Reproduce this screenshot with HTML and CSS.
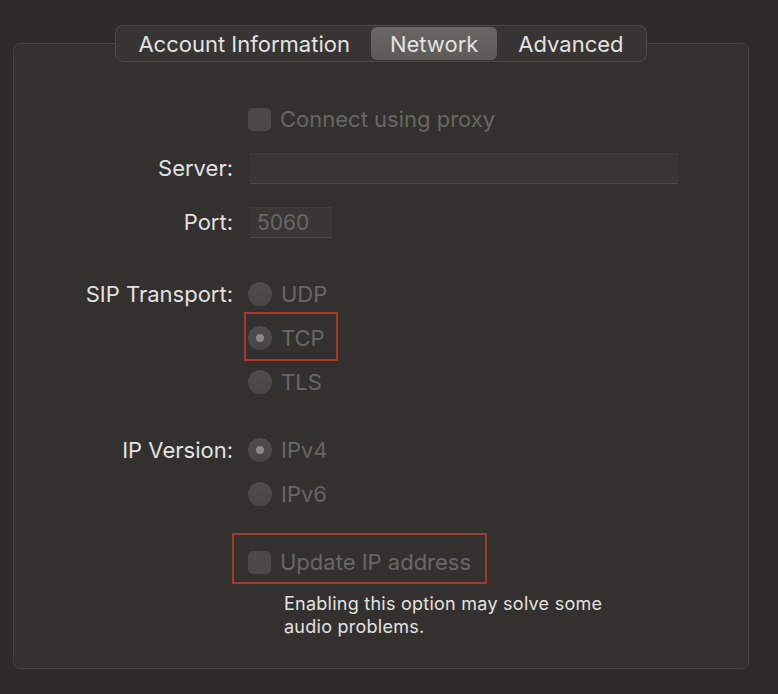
FILE: index.html
```html
<!DOCTYPE html>
<html lang="en">
<head>
  <meta charset="UTF-8">
  <title>Network Settings</title>
  <link rel="stylesheet" href="styles.css">
</head>
<body>
  <div class="panel">
    <div class="tabs">
      <div class="tab">Account Information</div>
      <div class="tab selected">Network</div>
      <div class="tab">Advanced</div>
    </div>

    <div class="row first">
      <div class="label"></div>
      <div class="control">
        <span class="option"><span class="checkbox"></span>Connect using proxy</span>
      </div>
    </div>

    <div class="row field-row server-row">
      <div class="label">Server:</div>
      <div class="control"><div class="input server"></div></div>
    </div>

    <div class="row field-row port-row">
      <div class="label">Port:</div>
      <div class="control"><div class="input port">5060</div></div>
    </div>

    <div class="row group">
      <div class="label">SIP Transport:</div>
      <div class="control stack">
        <span class="option"><span class="radio"></span>UDP</span>
        <span class="option mark mark-tcp"><span class="radio on"></span>TCP</span>
        <span class="option"><span class="radio"></span>TLS</span>
      </div>
    </div>

    <div class="row group">
      <div class="label">IP Version:</div>
      <div class="control stack">
        <span class="option"><span class="radio on"></span>IPv4</span>
        <span class="option"><span class="radio"></span>IPv6</span>
      </div>
    </div>

    <div class="row group">
      <div class="label"></div>
      <div class="control">
        <span class="option mark mark-update"><span class="checkbox"></span>Update IP address</span>
      </div>
    </div>

    <div class="row help-row">
      <div class="label"></div>
      <div class="control help">Enabling this option may solve some<br>audio problems.</div>
    </div>
  </div>
</body>
</html>
```

FILE: styles.css
```css
body {
  margin: 0;
  background: #2c2b2a;
  font-family: Inter, "Liberation Sans", sans-serif;
  color: #e3e2e0;
  height: 694px;
  overflow: hidden;
}
.panel {
  margin: 43px 0 0 13px;
  width: 734px;
  height: 624px;
  background: #32312f;
  border: 1px solid #454442;
  border-radius: 7px;
}
.tabs {
  display: flex;
  width: fit-content;
  margin: -19px auto 0;
  height: 33px;
  padding: 1px 1px;
  background: #363533;
  border: 1px solid #4b4a48;
  border-radius: 8px;
  font-size: 22px;
}
.tab {
  display: flex;
  align-items: center;
  padding: 0 21px;
  border-radius: 6px;
}
.tab.selected {
  background: linear-gradient(#686765, #5c5b59);
  padding: 0 19px;
}
.row {
  display: flex;
  align-items: flex-start;
  font-size: 22px;
}
.row.first { margin-top: 45px; }
.server-row { margin-top: 22px; }
.port-row { margin-top: 23px; }
.row.group { margin-top: 44px; }
.help-row { margin-top: 18px; }
.label {
  width: 219px;
  text-align: right;
  line-height: 24px;
  flex: none;
}
.field-row .label { line-height: 31px; }
.control {
  margin-left: 15px;
}
.stack {
  display: flex;
  flex-direction: column;
  gap: 20px;
}
.option {
  display: flex;
  align-items: center;
  height: 24px;
  color: #686765;
  width: fit-content;
}
.checkbox {
  width: 23px;
  height: 23px;
  border-radius: 5px;
  background: #4b4a49;
  margin-right: 9px;
}
.radio {
  width: 24px;
  height: 24px;
  border-radius: 50%;
  background: linear-gradient(#4e4d4c, #474645);
  margin-right: 9px;
  display: flex;
  align-items: center;
  justify-content: center;
}
.radio.on::after {
  content: "";
  width: 8px;
  height: 8px;
  border-radius: 50%;
  background: #8b8a89;
}
.input {
  margin-left: 2px;
  background: #383735;
  border-top: 1px solid #3c3b39;
  border-bottom: 1px solid #4a4947;
  box-sizing: border-box;
  height: 31px;
  color: #686765;
  font-size: 21px;
  line-height: 29px;
  padding-left: 7px;
}
.input.server { width: 428px; }
.input.port { width: 82px; }
.mark {
  border: 2px solid #a8392a;
}
.mark-tcp {
  padding: 12px 11px 9px 2px;
  margin: -14px -13px -11px -4px;
}
.mark-update {
  padding: 15px 14px 8px 14px;
  margin: -17px -16px -10px -16px;
}
.help {
  margin-left: 51px;
  font-size: 18px;
  letter-spacing: 0.25px;
  line-height: 23px;
}
```
